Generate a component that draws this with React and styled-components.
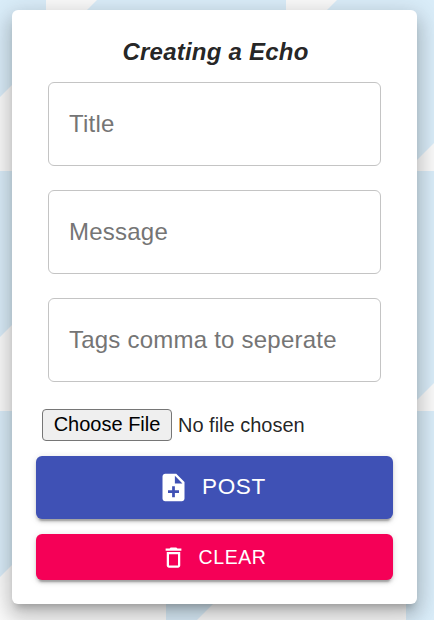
import React from "react";
import styled, { createGlobalStyle } from "styled-components";

const GlobalStyle = createGlobalStyle`
  *, *::before, *::after { box-sizing: border-box; }
  html, body { margin: 0; height: 100%; overflow: hidden; }
  body {
    background: #daedf9;
    color: rgba(0, 0, 0, 0.87);
    font-family: "Liberation Sans", Arial, sans-serif;
  }
`;

const Backdrop = styled.svg`
  position: absolute;
  inset: 0;
  width: 434px;
  height: 620px;
  z-index: -1;
`;

const Page = styled.main`
  position: relative;
  z-index: 0;
  height: 620px;
  padding: 10px 17px 16px 12px;
`;

const Card = styled.form`
  display: flex;
  flex-direction: column;
  height: 594px;
  padding: 24px;
  border-radius: 6px;
  background: #fff;
  box-shadow:
    0 7.5px 7.5px -4.5px rgba(0, 0, 0, 0.2),
    0 12px 18px 1.5px rgba(0, 0, 0, 0.14),
    0 4.5px 24px 4.5px rgba(0, 0, 0, 0.12);
`;

const Heading = styled.h1`
  margin: 0 0 12px;
  padding-left: 2px;
  font-size: 24px;
  font-style: italic;
  font-weight: 700;
  line-height: 36px;
  letter-spacing: 0.00938em;
  text-align: center;
`;

const Fields = styled.div`
  display: flex;
  flex-direction: column;
  gap: 24px;
  padding: 0 12px;
`;

const TextInput = styled.input`
  width: 100%;
  height: 84px;
  padding: 0 20px;
  border: 1px solid #c4c4c4;
  border-radius: 6px;
  outline: 0;
  background: transparent;
  color: inherit;
  font: 24px "Liberation Sans", Arial, sans-serif;
  letter-spacing: 0.00938em;

  &::placeholder {
    color: #757575;
    opacity: 1;
  }
`;

const FileInput = styled.input`
  display: block;
  width: 345px;
  height: 34px;
  margin: 26px 0 14px 6px;
  font: 20px "Liberation Sans", Arial, sans-serif;

  &::file-selector-button {
    width: 130px;
    height: 32px;
    margin: 1px 6px 0 0;
    padding: 0 0 2px;
    border: 1px solid #767676;
    border-radius: 4px;
    background: #efefef;
    color: #000;
    font: inherit;
    vertical-align: 1px;
  }
`;

const Button = styled.button`
  display: flex;
  align-items: center;
  justify-content: center;
  height: ${(p) => (p.$large ? 63 : 46)}px;
  margin: 0 0 ${(p) => (p.$large ? 15 : 0)}px;
  padding: 0;
  border: 0;
  border-radius: 6px;
  background: ${(p) => (p.$large ? "#3f51b5" : "#f50057")};
  color: #fff;
  font: ${(p) => (p.$large ? 22.5 : 19.5)}px "Liberation Sans", Arial, sans-serif;
  letter-spacing: 0.02857em;
  text-transform: uppercase;
  box-shadow:
    0 4.5px 1.5px -3px rgba(0, 0, 0, 0.2),
    0 3px 3px 0 rgba(0, 0, 0, 0.14),
    0 1.5px 7.5px 0 rgba(0, 0, 0, 0.12);
`;

const ButtonIcon = styled.svg`
  width: ${(p) => p.$size}px;
  height: ${(p) => p.$size}px;
  margin: 0 12px 0 ${(p) => p.$pull}px;
  fill: currentColor;
`;

const ButtonLabel = styled.span`
  padding-bottom: ${(p) => (p.$large ? 2 : 0)}px;
`;

const placeholders = ["Title", "Message", "Tags comma to seperate"];

export default function App() {
  return (
    <Page>
      <GlobalStyle />
      <Backdrop viewBox="0 0 434 620" fill="#fafafa" aria-hidden="true">
        <path d="M46 0H97L46 51V171H0V97L46 51Z" />
        <path d="M286 0H337L286 51Z" />
        <path d="M0 337L46 291V411H0Z" />
        <path d="M0 577L46 531H166V620H0Z" />
        <path d="M434 143L406 171H434Z" />
        <path d="M434 383L406 411H434Z" />
        <path d="M197 620L286 531H406V620Z" />
      </Backdrop>
      <Card onSubmit={(e) => e.preventDefault()}>
        <Heading>Creating a Echo</Heading>
        <Fields>
          {placeholders.map((text) => (
            <TextInput key={text} placeholder={text} aria-label={text} />
          ))}
        </Fields>
        <FileInput type="file" />
        <Button type="submit" $large>
          <ButtonIcon viewBox="0 0 24 24" $size={33} $pull={-6}>
            <path d="M14 2H6c-1.1 0-1.99.9-1.99 2L4 20c0 1.1.89 2 1.99 2H18c1.1 0 2-.9 2-2V8l-6-6zm2 14h-3v3h-2v-3H8v-2h3v-3h2v3h3v2zm-3-7V3.5L18.5 9H13z" />
          </ButtonIcon>
          <ButtonLabel $large>Post</ButtonLabel>
        </Button>
        <Button type="reset">
          <ButtonIcon viewBox="0 0 24 24" $size={27} $pull={-3}>
            <path d="M6 19c0 1.1.9 2 2 2h8c1.1 0 2-.9 2-2V7H6v12zM8 9h8v10H8V9zm7.5-5l-1-1h-5l-1 1H5v2h14V4z" />
          </ButtonIcon>
          <ButtonLabel>Clear</ButtonLabel>
        </Button>
      </Card>
    </Page>
  );
}
